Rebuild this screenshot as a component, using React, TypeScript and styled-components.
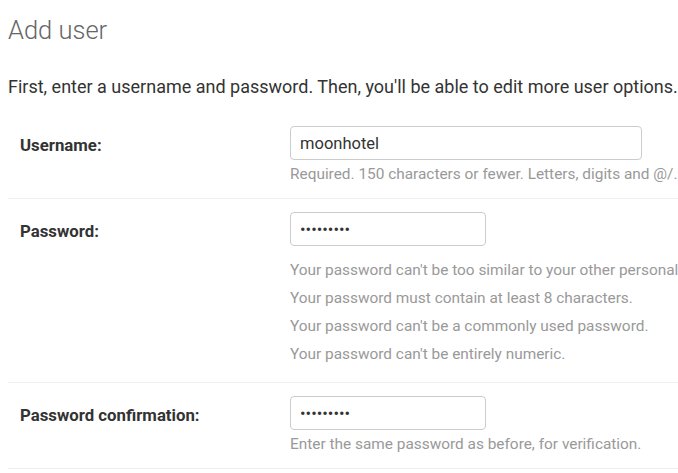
import React from 'react';
import styled, {createGlobalStyle} from 'styled-components';

const GlobalStyle = createGlobalStyle`
  html, body {
    margin: 0;
    padding: 0;
    background: #fff;
    overflow: hidden;
  }
  body {
    font-family: Roboto, "Liberation Sans", sans-serif;
    color: #333;
  }
`;

type Field = {
  label: string;
  type: 'text' | 'password';
  value: string;
  wide?: boolean;
  help: string[];
  list?: boolean;
};

const fields: Field[] = [
  {
    label: 'Username:',
    type: 'text',
    value: 'moonhotel',
    wide: true,
    help: ['Required. 150 characters or fewer. Letters, digits and @/.'],
  },
  {
    label: 'Password:',
    type: 'password',
    value: 'moonhotel',
    list: true,
    help: [
      "Your password can't be too similar to your other personal",
      'Your password must contain at least 8 characters.',
      "Your password can't be a commonly used password.",
      "Your password can't be entirely numeric.",
    ],
  },
  {
    label: 'Password confirmation:',
    type: 'password',
    value: 'moonhotel',
    help: ['Enter the same password as before, for verification.'],
  },
];

export default function App() {
  return (
    <>
      <GlobalStyle />
      <Content>
        <Title>Add user</Title>
        <Intro>
          First, enter a username and password. Then, you'll be able to edit more user options.
        </Intro>
        <Fieldset>
          {fields.map((f) => (
            <Row key={f.label}>
              <Label>{f.label}</Label>
              <FieldCol>
                <Input type={f.type} defaultValue={f.value} $wide={f.wide} readOnly />
                {f.list ? (
                  <HelpList>
                    {f.help.map((h) => (
                      <HelpItem key={h}>{h}</HelpItem>
                    ))}
                  </HelpList>
                ) : (
                  <Help>{f.help[0]}</Help>
                )}
              </FieldCol>
            </Row>
          ))}
        </Fieldset>
      </Content>
    </>
  );
}

const Content = styled.div`
  padding: 15px 0 0 8px;
  width: 670px;
`;

const Title = styled.h1`
  margin: 0;
  font-size: 25.5px;
  font-weight: 300;
  color: #666;
  line-height: 30px;
`;

const Intro = styled.p`
  margin: 30px 0 0;
  font-size: 18px;
  line-height: 24px;
  color: #333;
  white-space: nowrap;
`;

const Fieldset = styled.div`
  margin-top: 14px;
  display: flex;
  flex-direction: column;
`;

const Row = styled.div`
  display: flex;
  align-items: flex-start;
  padding: 13px 0 10px 12px;
  border-bottom: 1px solid #eee;
`;

const Label = styled.label`
  width: 270px;
  flex: none;
  margin-top: 2px;
  font-size: 16.8px;
  font-weight: 700;
  color: #333;
  line-height: 34px;
`;

const FieldCol = styled.div`
  display: flex;
  flex-direction: column;
  min-width: 0;
  flex: 1;
`;

const Input = styled.input<{$wide?: boolean}>`
  box-sizing: border-box;
  width: ${(p) => (p.$wide ? '352px' : '196px')};
  height: 34px;
  padding: 0 9px;
  border: 1px solid #ccc;
  border-radius: 4px;
  font-family: Roboto, "Liberation Sans", sans-serif;
  font-size: 16.5px;
  color: #333;
  background: #fff;
  outline: none;
`;

const Help = styled.div`
  font-size: 15.4px;
  line-height: 20px;
  padding: 4px 0;
  color: #999;
  white-space: nowrap;
`;

const HelpList = styled.ul`
  list-style: none;
  margin: 10px 0 4px;
  padding: 0;
`;

const HelpItem = styled.li`
  font-size: 15.4px;
  line-height: 20px;
  padding: 4px 0;
  color: #999;
  white-space: nowrap;
`;
